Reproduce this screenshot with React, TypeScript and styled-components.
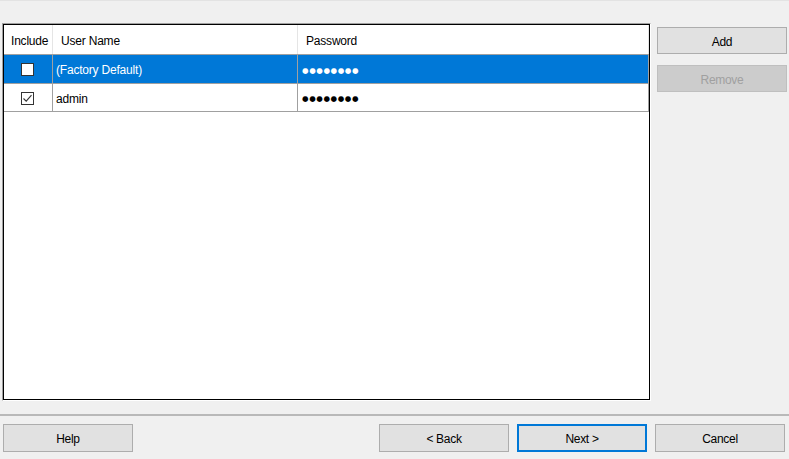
import React from "react";
import styled, { createGlobalStyle } from "styled-components";

const Global = createGlobalStyle`
  html, body { margin: 0; padding: 0; background: #f0f0f0; }
  body { font-family: "Liberation Sans", Arial, sans-serif; font-size: 12px; color: #000; }
`;

const Window = styled.div`
  width: 789px;
  height: 459px;
  box-sizing: border-box;
  background: #f0f0f0;
  border-top: 1px solid #e3e3e3;
  display: flex;
  flex-direction: column;
`;

const Main = styled.div`
  display: flex;
  padding: 22px 0 0 2px;
  gap: 6px;
`;

const Frame = styled.div`
  width: 649px;
  height: 378px;
  box-sizing: border-box;
  border: 1px solid;
  border-color: #a0a0a0 #ffffff #ffffff #a0a0a0;
  display: flex;
`;

const Inner = styled.div`
  flex: 1;
  border: 1px solid #000;
  background: #fff;
  display: flex;
  flex-direction: column;
`;

const Row = styled.div<{ $h: number; $selected?: boolean }>`
  display: grid;
  grid-template-columns: 49px 245px 1fr;
  height: ${(p) => p.$h}px;
  box-sizing: border-box;
  border-bottom: 1px solid #a0a0a0;
  background: ${(p) => (p.$selected ? "#0078d7" : "#fff")};
  color: ${(p) => (p.$selected ? "#fff" : "#000")};
`;

const Cell = styled.div<{ $center?: boolean; $pad?: number; $head?: boolean }>`
  border-right: 1px solid ${(p) => (p.$head ? "#e5e5e5" : "#a0a0a0")};
  display: flex;
  align-items: center;
  justify-content: ${(p) => (p.$center ? "center" : "flex-start")};
  padding-left: ${(p) => p.$pad ?? 0}px;
  padding-top: ${(p) => (p.$center ? 0 : 2)}px;
  white-space: nowrap;
  overflow: hidden;
  letter-spacing: -0.2px;
`;

const Check = styled.span`
  width: 13px;
  height: 13px;
  box-sizing: border-box;
  border: 1px solid #333;
  background: #fff;
  display: inline-flex;
  align-items: center;
  justify-content: center;
  margin-left: -1px;
  margin-top: 1px;
`;

const Dots = styled.span`
  font-family: "DejaVu Sans", sans-serif;
  font-size: 7.5px;
  letter-spacing: 0.6px;
`;

const Side = styled.div`
  display: flex;
  flex-direction: column;
  gap: 11px;
  padding-top: 4px;
`;

const Button = styled.button<{ $h?: number; $primary?: boolean }>`
  width: 130px;
  height: ${(p) => p.$h ?? 27}px;
  box-sizing: border-box;
  margin: 0;
  padding: 2px 0 0;
  background: ${(p) => (p.disabled ? "#cccccc" : "#e1e1e1")};
  border: 1px solid ${(p) => (p.$primary ? "#0078d7" : p.disabled ? "#bfbfbf" : "#adadad")};
  box-shadow: ${(p) => (p.$primary ? "inset 0 0 0 1px #0078d7" : "none")};
  color: ${(p) => (p.disabled ? "#a0a0a0" : "#000")};
  font-family: "Liberation Sans", Arial, sans-serif;
  font-size: 12px;
  letter-spacing: -0.3px;
`;

const Separator = styled.div`
  margin-top: 13px;
  height: 2px;
  background: #b9b9b9;
`;

const Footer = styled.div`
  display: flex;
  align-items: center;
  padding: 8px 4px 0 3px;
`;

const Spacer = styled.div`
  flex: 1;
`;

const Group = styled.div`
  display: flex;
  gap: 8px;
`;

const CheckMark = () => (
  <svg width="11" height="11" viewBox="0 0 11 11">
    <path d="M1.5 5.5 L4.2 8.2 L9.5 2.2" fill="none" stroke="#333" strokeWidth="1.1" />
  </svg>
);

const users = [
  { name: "(Factory Default)", checked: false, selected: true, h: 29 },
  { name: "admin", checked: true, selected: false, h: 28 },
];

export default function App() {
  return (
    <>
      <Global />
      <Window>
        <Main>
          <Frame>
            <Inner>
              <Row $h={30}>
                <Cell $head $pad={7}>Include</Cell>
                <Cell $head $pad={8}>User Name</Cell>
                <Cell $head $pad={8}>Password</Cell>
              </Row>
              {users.map((u) => (
                <Row key={u.name} $h={u.h} $selected={u.selected}>
                  <Cell $center>
                    <Check>{u.checked && <CheckMark />}</Check>
                  </Cell>
                  <Cell $pad={3}>{u.name}</Cell>
                  <Cell $pad={4}>
                    <Dots>●●●●●●●●</Dots>
                  </Cell>
                </Row>
              ))}
            </Inner>
          </Frame>
          <Side>
            <Button>Add</Button>
            <Button disabled>Remove</Button>
          </Side>
        </Main>
        <Separator />
        <Footer>
          <Button $h={28}>Help</Button>
          <Spacer />
          <Group>
            <Button $h={28}>&lt; Back</Button>
            <Button $h={28} $primary>Next &gt;</Button>
            <Button $h={28}>Cancel</Button>
          </Group>
        </Footer>
      </Window>
    </>
  );
}
